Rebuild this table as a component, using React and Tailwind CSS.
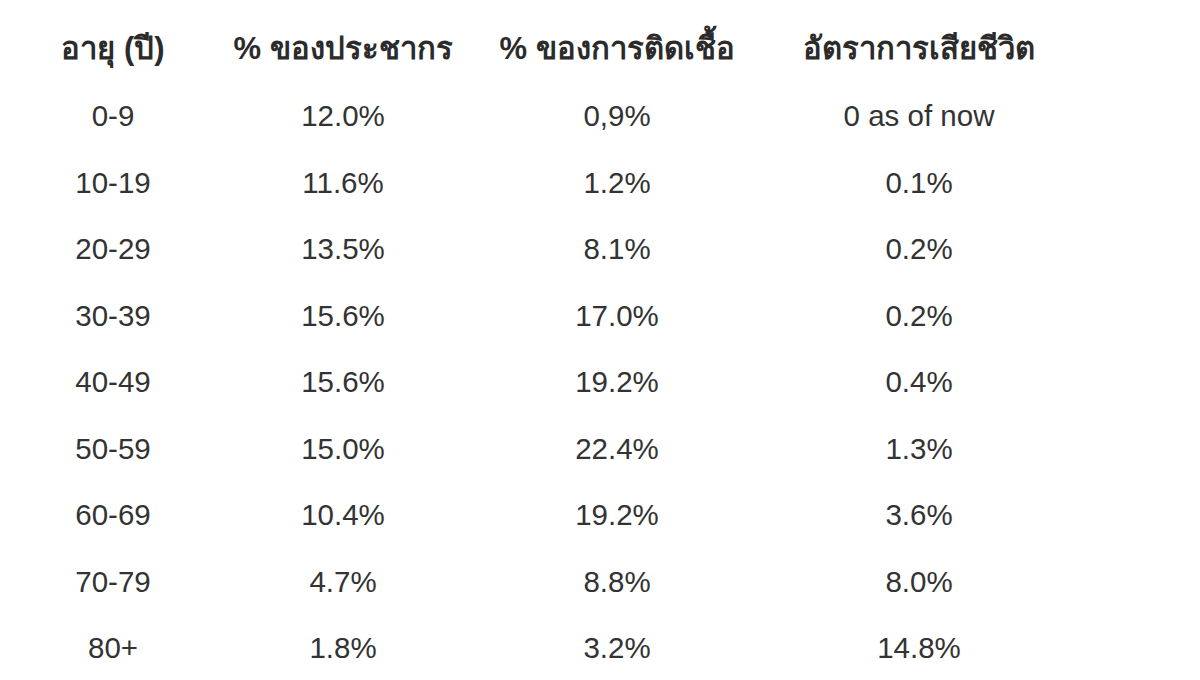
const headers = ["อายุ (ปี)", "% ของประชากร", "% ของการติดเชื้อ", "อัตราการเสียชีวิต"];

const rows = [
  ["0-9", "12.0%", "0,9%", "0 as of now"],
  ["10-19", "11.6%", "1.2%", "0.1%"],
  ["20-29", "13.5%", "8.1%", "0.2%"],
  ["30-39", "15.6%", "17.0%", "0.2%"],
  ["40-49", "15.6%", "19.2%", "0.4%"],
  ["50-59", "15.0%", "22.4%", "1.3%"],
  ["60-69", "10.4%", "19.2%", "3.6%"],
  ["70-79", "4.7%", "8.8%", "8.0%"],
  ["80+", "1.8%", "3.2%", "14.8%"],
];

const cols = "grid grid-cols-[226px_234px_314px_290px]";

export default function App() {
  return (
    <div className="w-[1200px] h-[680px] bg-white text-[#333333] font-['Liberation_Sans',Arial,sans-serif] pt-[15px]">
      <div className={`${cols} h-[68px] items-center font-bold text-[31px] text-[#2b2b2b]`}>
        {headers.map((h) => (
          <div key={h} className="text-center whitespace-nowrap">{h}</div>
        ))}
      </div>
      {rows.map((r) => (
        <div key={r[0]} className={`${cols} h-[66.5px] items-center text-[29.5px]`}>
          {r.map((c, i) => (
            <div key={i} className="text-center whitespace-nowrap">{c}</div>
          ))}
        </div>
      ))}
    </div>
  );
}
